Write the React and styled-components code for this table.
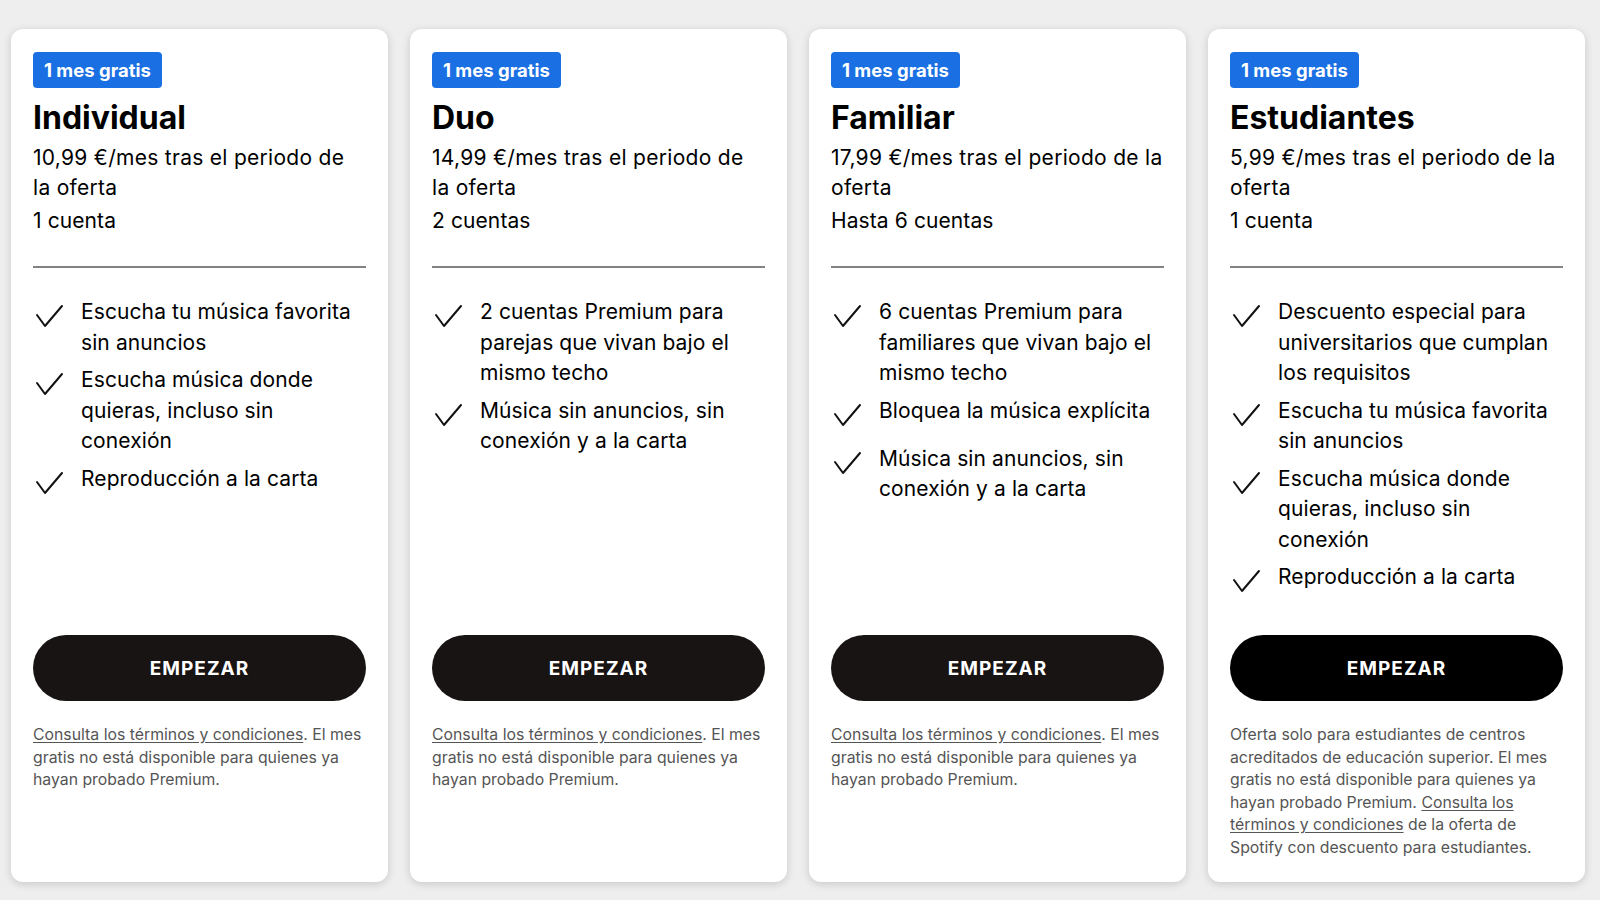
import React from "react";
import styled, { createGlobalStyle } from "styled-components";

const GlobalStyle = createGlobalStyle`
  html, body {
    margin: 0;
    padding: 0;
    background: #eeeeee;
  }
  body {
    font-family: Inter, "Noto Sans", "Liberation Sans", sans-serif;
    color: #000;
  }
`;

const Page = styled.div`
  width: 1600px;
  height: 900px;
  box-sizing: border-box;
  padding: 29px 13px 18px 11px;
  display: grid;
  grid-template-columns: repeat(4, 377px);
  column-gap: 22px;
  overflow: hidden;
`;

const Card = styled.section`
  background: #fff;
  border-radius: 12px;
  box-shadow: 0 2px 8px rgba(0, 0, 0, 0.16);
  padding: 23px 22px 23px;
  display: flex;
  flex-direction: column;
  box-sizing: border-box;
`;

const Badge = styled.span`
  align-self: flex-start;
  height: 36px;
  line-height: 36px;
  padding: 0 11px;
  border-radius: 4px;
  background: #1a6fe3;
  color: #fff;
  font-weight: 700;
  font-size: 18.5px;
`;

const Title = styled.h2`
  margin: 10px 0 0;
  font-size: 32px;
  line-height: 40px;
  font-weight: 700;
`;

const Price = styled.p`
  margin: 5px 0 0;
  font-size: 21px;
  line-height: 30px;
  letter-spacing: 0.29px;
`;

const Accounts = styled.p`
  margin: 3px 0 0;
  font-size: 21px;
  line-height: 30px;
  letter-spacing: 0.1px;
`;

const Divider = styled.hr`
  margin: 30px 0 0;
  border: 0;
  height: 2px;
  background: #828282;
`;

const Features = styled.ul`
  list-style: none;
  margin: 29px 0 0;
  padding: 0;
  flex: 1;
  display: flex;
  flex-direction: column;
  gap: 7px;
`;

const Feature = styled.li`
  display: flex;
  min-height: 41px;
  font-size: 21px;
  line-height: 30.5px;
  letter-spacing: 0.1px;
`;

const CheckBox = styled.span`
  flex: 0 0 48px;
  height: 40px;
`;

const Button = styled.button`
  height: 66px;
  width: 100%;
  border: 0;
  border-radius: 33px;
  background: ${(p) => (p.$active ? "#000" : "#181414")};
  color: #fff;
  font-family: inherit;
  font-size: 19px;
  font-weight: 700;
  letter-spacing: 1px;
  cursor: pointer;
`;

const FinePrint = styled.p`
  margin: 23px 0 0;
  height: 135px;
  font-size: 15.8px;
  line-height: 22.5px;
  color: #555;

  a {
    color: #555;
    text-decoration: underline;
    text-underline-offset: 2px;
  }
`;

function Check() {
  return (
    <CheckBox>
      <svg width="40" height="40" viewBox="0 0 40 40" fill="none">
        <polyline
          points="4,18 12,29 29,9"
          stroke="#111"
          strokeWidth="2"
          strokeLinecap="round"
          strokeLinejoin="round"
        />
      </svg>
    </CheckBox>
  );
}

const terms = <a href="#">Consulta los términos y condiciones</a>;

const plans = [
  {
    name: "Individual",
    price: "10,99 €/mes tras el periodo de la oferta",
    accounts: "1 cuenta",
    features: [
      "Escucha tu música favorita sin anuncios",
      "Escucha música donde quieras, incluso sin conexión",
      "Reproducción a la carta",
    ],
    fine: (
      <>
        {terms}. El mes gratis no está disponible para quienes ya hayan probado
        Premium.
      </>
    ),
  },
  {
    name: "Duo",
    price: "14,99 €/mes tras el periodo de la oferta",
    accounts: "2 cuentas",
    features: [
      "2 cuentas Premium para parejas que vivan bajo el mismo techo",
      "Música sin anuncios, sin conexión y a la carta",
    ],
    fine: (
      <>
        {terms}. El mes gratis no está disponible para quienes ya hayan probado
        Premium.
      </>
    ),
  },
  {
    name: "Familiar",
    price: "17,99 €/mes tras el periodo de la oferta",
    accounts: "Hasta 6 cuentas",
    features: [
      "6 cuentas Premium para familiares que vivan bajo el mismo techo",
      "Bloquea la música explícita",
      "Música sin anuncios, sin conexión y a la carta",
    ],
    fine: (
      <>
        {terms}. El mes gratis no está disponible para quienes ya hayan probado
        Premium.
      </>
    ),
  },
  {
    name: "Estudiantes",
    price: "5,99 €/mes tras el periodo de la oferta",
    accounts: "1 cuenta",
    active: true,
    features: [
      "Descuento especial para universitarios que cumplan los requisitos",
      "Escucha tu música favorita sin anuncios",
      "Escucha música donde quieras, incluso sin conexión",
      "Reproducción a la carta",
    ],
    fine: (
      <>
        Oferta solo para estudiantes de centros acreditados de educación
        superior. El mes gratis no está disponible para quienes ya hayan
        probado Premium. <a href="#">Consulta los términos y condiciones</a> de
        la oferta de Spotify con descuento para estudiantes.
      </>
    ),
  },
];

export default function App() {
  return (
    <>
      <GlobalStyle />
      <Page>
        {plans.map((plan) => (
          <Card key={plan.name}>
            <Badge>1 mes gratis</Badge>
            <Title>{plan.name}</Title>
            <Price>{plan.price}</Price>
            <Accounts>{plan.accounts}</Accounts>
            <Divider />
            <Features>
              {plan.features.map((f) => (
                <Feature key={f}>
                  <Check />
                  <span>{f}</span>
                </Feature>
              ))}
            </Features>
            <Button $active={plan.active}>EMPEZAR</Button>
            <FinePrint>{plan.fine}</FinePrint>
          </Card>
        ))}
      </Page>
    </>
  );
}
